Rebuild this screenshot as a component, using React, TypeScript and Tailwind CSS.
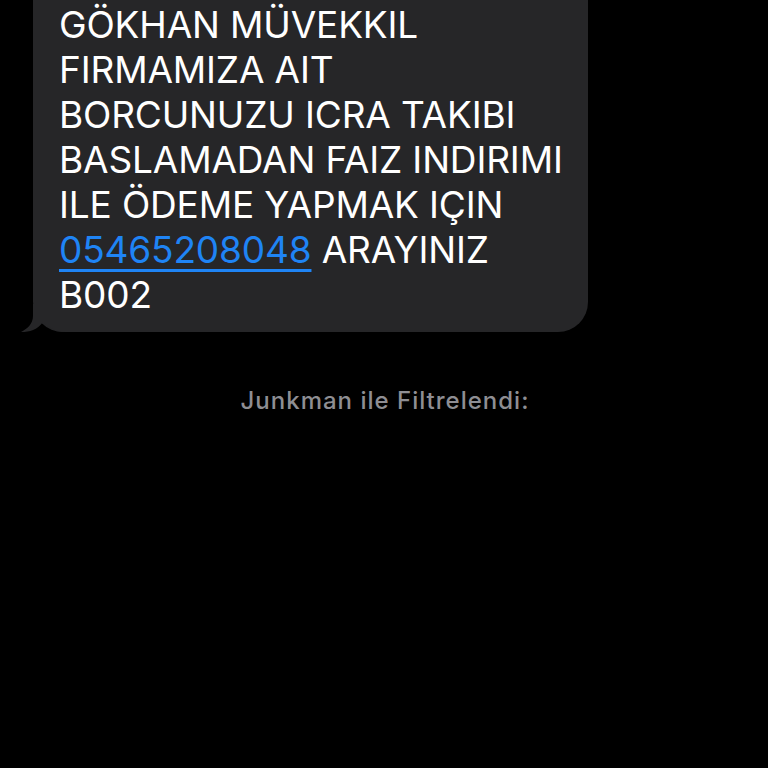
export default function App() {
  const lines = [
    "GÖKHAN MÜVEKKIL",
    "FIRMAMIZA AIT",
    "BORCUNUZU ICRA TAKIBI",
    "BASLAMADAN FAIZ INDIRIMI",
    "ILE ÖDEME YAPMAK IÇIN",
  ];

  return (
    <div className="w-[768px] h-[768px] bg-black overflow-hidden font-['Inter',sans-serif]">
      <div className="relative ml-[33px] mt-[-60px] w-[555px] bg-[#262628] rounded-[30px] pl-[26px] pt-[62px] pb-[15px]">
        {/* tail */}
        <svg className="absolute left-[-12px] bottom-0" width="44" height="28" viewBox="0 0 44 28">
          <path d="M12 0 L12 12 C12 20 6 25 0 28 C9 28 16 26 22 18 C28 24 35 28 44 28 L44 0 Z" fill="#262628" />
        </svg>
        <div className="relative text-white text-[37px] leading-[45px] tracking-[-0.15px]">
          {lines.map((l) => (
            <div key={l}>{l}</div>
          ))}
          <div>
            <span className="text-[#1f84f5] underline decoration-[3px] underline-offset-[6px]">05465208048</span> ARAYINIZ
          </div>
          <div>B002</div>
        </div>
      </div>
      <div className="mt-[54px] text-center text-[#8e8e93] text-[24px] leading-[30px] font-medium tracking-[1px]">
        <span className="inline-block pl-[2px]">Junkman ile Filtrelendi:</span>
      </div>
    </div>
  );
}
